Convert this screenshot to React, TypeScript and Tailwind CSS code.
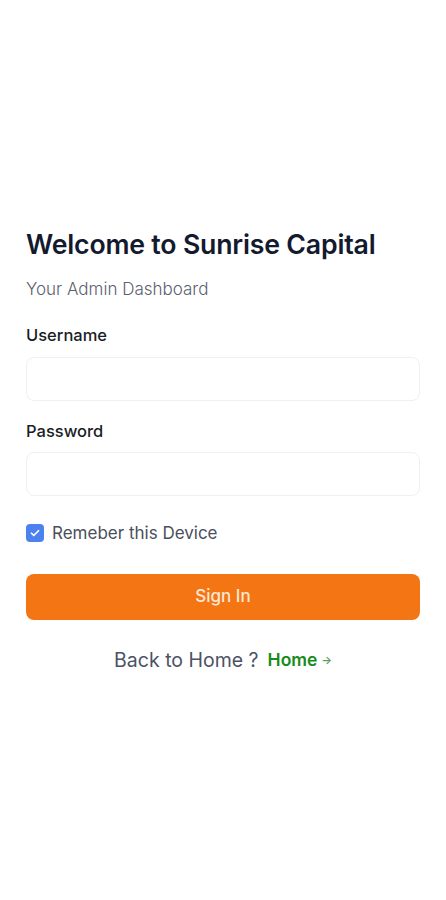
import { useState } from "react";

export default function App() {
  const [remember, setRemember] = useState(true);

  return (
    <div
      className="min-h-screen bg-white px-[26px] pt-[227px]"
      style={{ fontFamily: "Inter, 'Noto Sans', sans-serif" }}
    >
      <h1 className="text-[26.7px] leading-[34px] font-semibold text-[#141a2e] tracking-[-0.2px]">
        Welcome to Sunrise Capital
      </h1>
      <p className="mt-[16px] text-[17px] leading-[24px] font-light text-[#5b6170]">
        Your Admin Dashboard
      </p>

      <div className="mt-[23px]">
        <label className="block text-[16.5px] leading-[22px] font-medium text-[#1a1d26]">
          Username
        </label>
        <input
          type="text"
          className="mt-[11px] block w-full h-[44px] px-3 rounded-lg border border-[#eef0f3] bg-white outline-none"
        />
      </div>

      <div className="mt-[19px]">
        <label className="block text-[16.5px] leading-[22px] font-medium text-[#1a1d26]">
          Password
        </label>
        <input
          type="password"
          className="mt-[10px] block w-full h-[44px] px-3 rounded-lg border border-[#eef0f3] bg-white outline-none"
        />
      </div>

      <label className="mt-[25px] flex items-center gap-[8px] cursor-pointer">
        <span
          onClick={() => setRemember(!remember)}
          className={
            remember
              ? "w-[18px] h-[18px] rounded-[4px] bg-[#4c82f0] flex items-center justify-center"
              : "w-[18px] h-[18px] rounded-[4px] border border-gray-400 bg-white"
          }
        >
          {remember && (
            <svg width="12" height="12" viewBox="0 0 24 24" fill="none" stroke="white" strokeWidth="3.5" strokeLinecap="round" strokeLinejoin="round">
              <path d="M5 12.5l4.5 4.5L19 7.5" />
            </svg>
          )}
        </span>
        <span className="text-[17px] leading-[24px] text-[#4a4f5c]">Remeber this Device</span>
      </label>

      <button className="mt-[29px] w-full h-[46px] rounded-lg bg-[#f47514] text-[#fde8d6] text-[17px] font-medium">
        Sign In
      </button>

      <div className="mt-[27px] flex items-center justify-center gap-[9px]">
        <span className="text-[19.5px] leading-[26px] text-[#4b5265]">Back to Home ?</span>
        <a href="#" className="text-[17.5px] leading-[24px] font-semibold text-[#198a1c] flex items-center gap-[4px]">
          Home <span className="text-[11px] text-[#5e9a5e]">→</span>
        </a>
      </div>
    </div>
  );
}
